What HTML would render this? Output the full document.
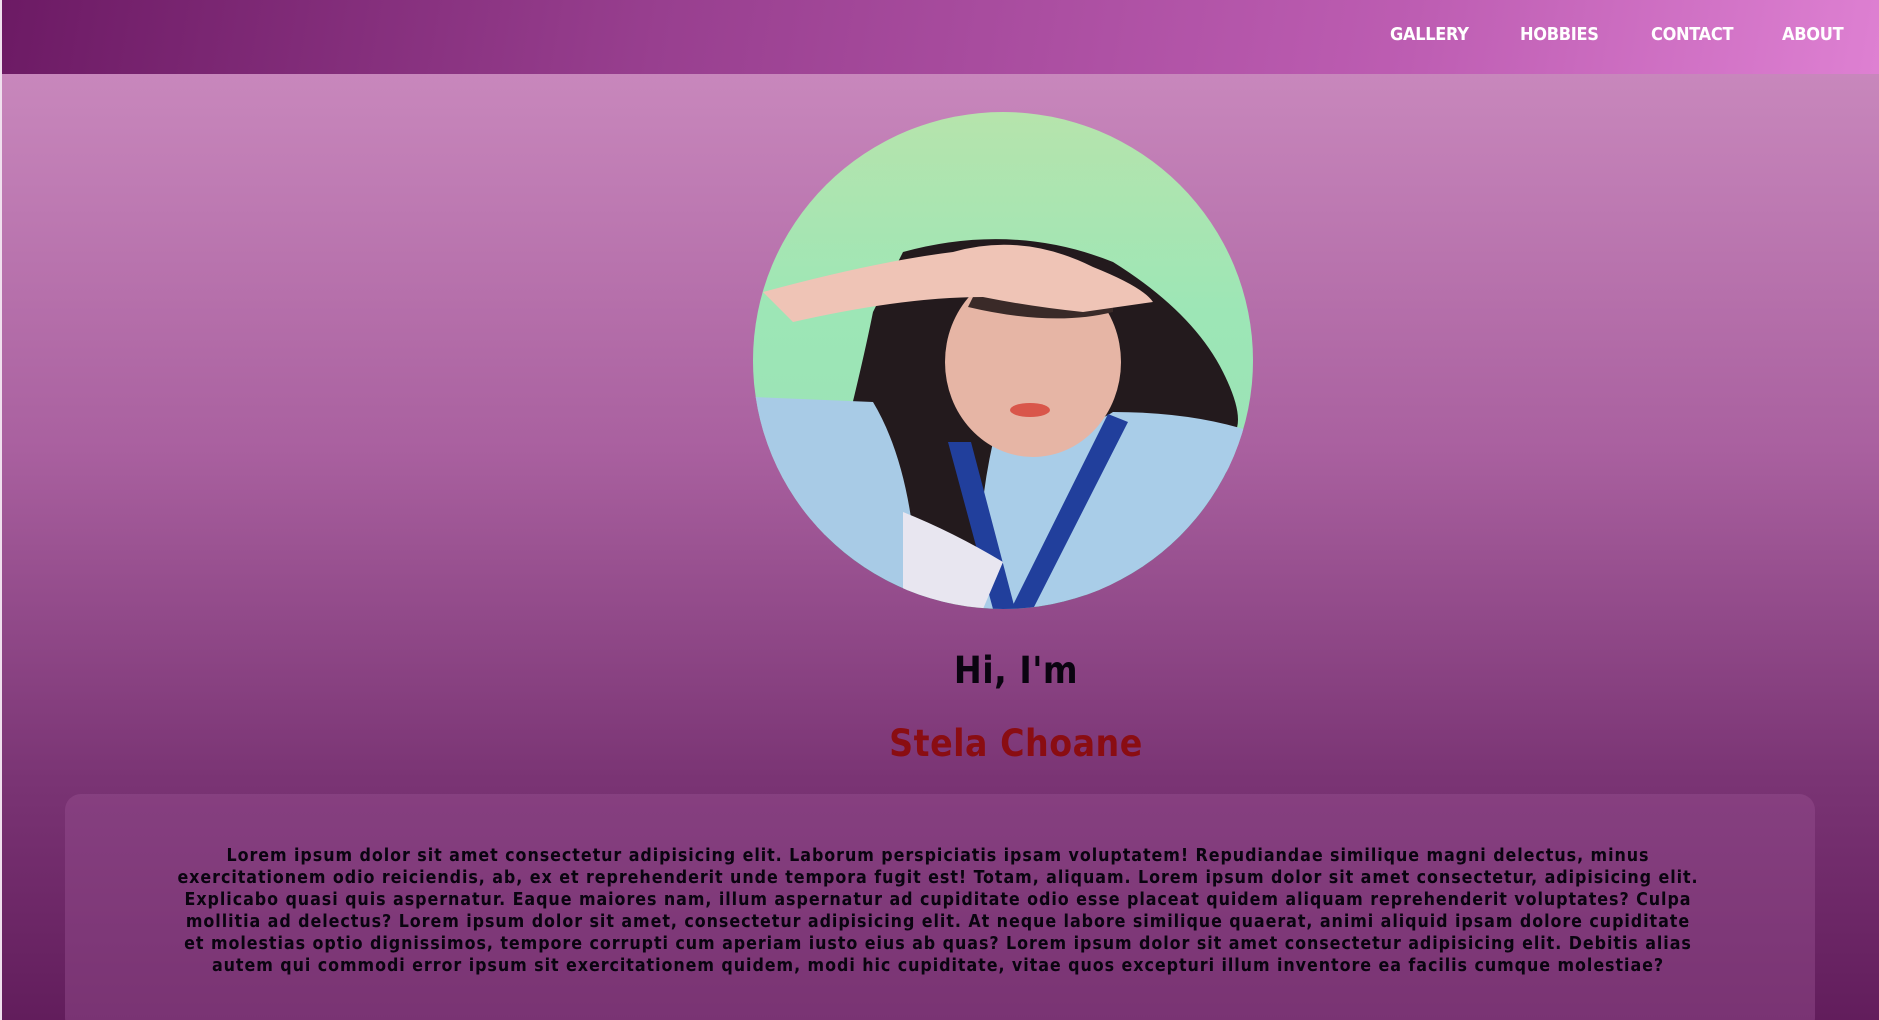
<!DOCTYPE html>
<html style="width:1879px;height:1020px;overflow:hidden;background:#621d5c"><head><meta charset="utf-8"><style>
*{margin:0;padding:0;box-sizing:border-box}
body{width:1879px;height:1020px;overflow:hidden;font-family:"DejaVu Sans Condensed","DejaVu Sans",sans-serif;background:linear-gradient(to bottom,#c887bc 74px,#a9609f 450px,#7a3474 780px,#621d5c 1020px);position:relative}
.hdr{position:absolute;left:0;top:0;width:1879px;height:74px;background:linear-gradient(100deg,#6c1a64 0%,#983f8f 35%,#bd5db2 75%,#de80d2 100%)}
.nav a{position:absolute;top:24px;color:#fff;font-weight:bold;font-size:18px;text-decoration:none;letter-spacing:-0.3px}
.strip{position:absolute;left:0;top:0;width:2px;height:1020px;background:#f0e0ee}
.pic{position:absolute;left:753px;top:112px;width:500px;height:497px;border-radius:50%;overflow:hidden}
h1{position:absolute;left:816px;width:400px;top:649px;text-align:center;font-size:37px;color:#0a0410;font-weight:bold;letter-spacing:0.5px}
h2{position:absolute;left:816px;width:400px;top:722px;text-align:center;font-size:37px;color:#8a0d12;font-weight:bold;letter-spacing:0.5px}
.box{position:absolute;left:65px;top:794px;width:1750px;height:240px;border-radius:16px;background:rgba(150,80,145,0.45)}
.box p{position:absolute;left:110px;width:1526px;top:51px;text-align:center;font-size:17.7px;line-height:22px;font-weight:bold;color:#0a0410;letter-spacing:0.95px}
</style></head><body>
<div class="hdr"><div class="nav">
<a style="left:1390px">GALLERY</a><a style="left:1520px">HOBBIES</a><a style="left:1651px">CONTACT</a><a style="left:1782px">ABOUT</a>
</div></div>
<div class="strip"></div>
<div class="pic"><svg width="500" height="497" viewBox="0 0 500 497">
<defs><linearGradient id="g" x1="0" y1="0" x2="0" y2="1"><stop offset="0" stop-color="#b6e4ac"/><stop offset="0.4" stop-color="#9de6b6"/><stop offset="1" stop-color="#98e0b8"/></linearGradient></defs>
<rect width="500" height="497" fill="url(#g)"/>
<path d="M150 140 Q260 110 360 150 Q440 200 470 260 Q500 320 470 330 L480 420 L300 497 L80 497 Q60 420 90 330 Q110 250 120 200 Z" fill="#231a1d"/>
<path d="M0 285 L120 290 Q150 340 160 420 L200 497 L0 497 Z" fill="#a8cbe6"/>
<path d="M240 330 Q330 320 360 300 Q440 300 500 320 L500 497 L230 497 Q220 420 240 330 Z" fill="#a9cde8"/>
<ellipse cx="280" cy="250" rx="88" ry="95" fill="#e6b5a5"/>
<path d="M215 195 Q300 215 360 200 L360 180 Q290 190 225 175 Z" fill="#3a2a28"/>
<ellipse cx="277" cy="298" rx="20" ry="7" fill="#d9564a"/>
<path d="M10 180 Q120 150 200 140 Q270 120 340 155 Q390 175 400 190 L330 200 Q280 195 230 185 Q150 185 40 210 Z" fill="#efc4b6"/>
<path d="M195 330 L240 497 L262 497 L218 330 Z M355 302 L258 497 L280 497 L375 310 Z" fill="#213f9c"/>
<path d="M150 400 Q200 420 250 450 L230 497 L150 497 Z" fill="#e8e6f0"/>
</svg></div>
<h1>Hi, I'm</h1>
<h2>Stela Choane</h2>
<div class="box"><p>Lorem ipsum dolor sit amet consectetur adipisicing elit. Laborum perspiciatis ipsam voluptatem! Repudiandae similique magni delectus, minus exercitationem odio reiciendis, ab, ex et reprehenderit unde tempora fugit est! Totam, aliquam. Lorem ipsum dolor sit amet consectetur, adipisicing elit. Explicabo quasi quis aspernatur. Eaque maiores nam, illum aspernatur ad cupiditate odio esse placeat quidem aliquam reprehenderit voluptates? Culpa mollitia ad delectus? Lorem ipsum dolor sit amet, consectetur adipisicing elit. At neque labore similique quaerat, animi aliquid ipsam dolore cupiditate et molestias optio dignissimos, tempore corrupti cum aperiam iusto eius ab quas? Lorem ipsum dolor sit amet consectetur adipisicing elit. Debitis alias autem qui commodi error ipsum sit exercitationem quidem, modi hic cupiditate, vitae quos excepturi illum inventore ea facilis cumque molestiae?</p></div>
</body></html>
